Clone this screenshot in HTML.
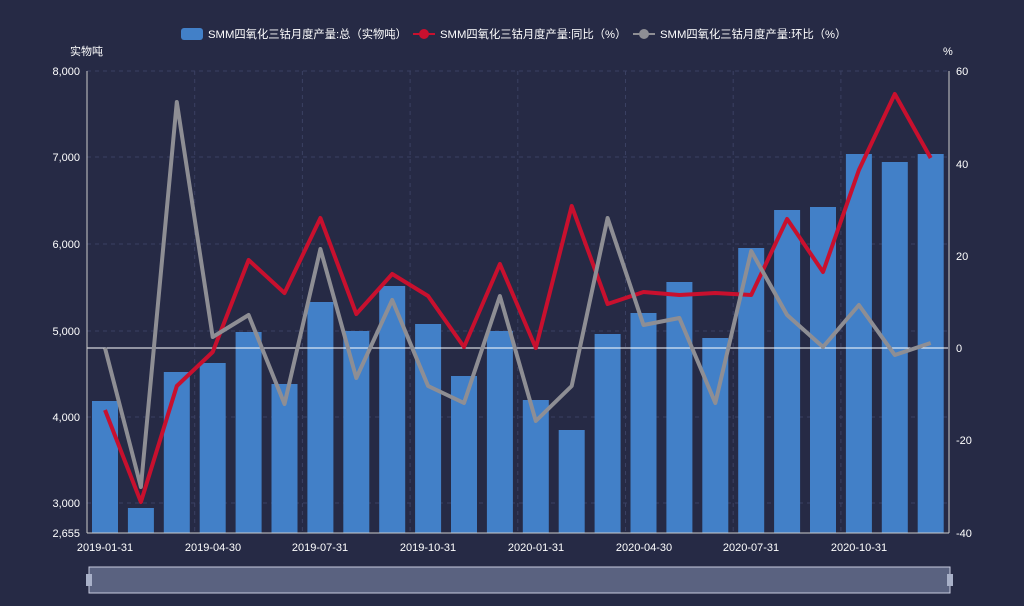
<!DOCTYPE html>
<html><head><meta charset="utf-8"><style>
body{margin:0;background:#262a45;width:1024px;height:601px;overflow:hidden;font-family:"Liberation Sans","Noto Sans CJK SC",sans-serif}
svg text{font-family:"Liberation Sans","Noto Sans CJK SC",sans-serif;fill:#fff;font-size:11px}
</style></head><body>
<svg id="s" width="1024" height="601" xmlns="http://www.w3.org/2000/svg">
<rect width="1024" height="601" fill="#262a45"/>
<g id="grid" stroke="#3a4062" stroke-dasharray="4,4" stroke-width="1"></g>
<g id="bars" fill="#4280c8"></g>
<line x1="87" y1="348" x2="948" y2="348" stroke="#fff" stroke-width="1"/>
<polyline id="red" fill="none" stroke="#c8102e" stroke-width="4" stroke-linejoin="round"/>
<polyline id="gray" fill="none" stroke="#8e8e94" stroke-width="4" stroke-linejoin="round"/>
<line x1="87" y1="71" x2="87" y2="533" stroke="#ccc"/>
<line x1="949" y1="71" x2="949" y2="533" stroke="#ccc"/>
<line x1="87" y1="533" x2="949" y2="533" stroke="#ccc"/>
<g text-anchor="end">
<text x="80" y="75">8,000</text><text x="80" y="161">7,000</text><text x="80" y="248">6,000</text><text x="80" y="335">5,000</text><text x="80" y="421">4,000</text><text x="80" y="507">3,000</text><text x="80" y="537">2,655</text>
</g>
<text x="70" y="55">实物吨</text>
<text x="943" y="55">%</text>
<g><text x="956" y="75">60</text><text x="956" y="168">40</text><text x="956" y="260">20</text><text x="956" y="352">0</text><text x="956" y="444">-20</text><text x="956" y="537">-40</text></g>
<g text-anchor="middle">
<text x="105" y="551">2019-01-31</text><text x="213" y="551">2019-04-30</text><text x="320" y="551">2019-07-31</text><text x="428" y="551">2019-10-31</text><text x="536" y="551">2020-01-31</text><text x="644" y="551">2020-04-30</text><text x="751" y="551">2020-07-31</text><text x="859" y="551">2020-10-31</text>
</g>
<rect x="181" y="28" width="22" height="12" rx="3" fill="#4280c8"/>
<text x="208" y="38" style="font-size:11.3px">SMM四氧化三钴月度产量:总（实物吨）</text>
<line x1="413" y1="34" x2="435" y2="34" stroke="#c8102e" stroke-width="2"/><circle cx="424" cy="34" r="5" fill="#c8102e"/>
<text x="440" y="38" style="font-size:11.3px">SMM四氧化三钴月度产量:同比（%）</text>
<line x1="633" y1="34" x2="655" y2="34" stroke="#8e8e94" stroke-width="2"/><circle cx="644" cy="34" r="5" fill="#8e8e94"/>
<text x="660" y="38" style="font-size:11.3px">SMM四氧化三钴月度产量:环比（%）</text>
<rect x="89" y="567" width="861" height="26" fill="#5a6280" stroke="#c8cce0" stroke-width="1"/>
<rect x="86" y="574" width="6" height="12" fill="#a8b0c8"/><rect x="947" y="574" width="6" height="12" fill="#a8b0c8"/>
</svg>
<script>
var b=[401,508,372,363,332,384,302,331,286,324,376,331,400,430,334,313,282,338,248,210,207,154,162,154];
var r=[410,502,386,352,260,293,218,314,274,296,347,264,348,206,304,292,295,293,295,219,272,170,94,158];
var g=[348,487,102,337,315,404,249,378,300,386,403,296,421,386,218,325,318,403,251,315,347,305,355,343];
var ns="http://www.w3.org/2000/svg",W=35.9;
function el(t,a,p){var e=document.createElementNS(ns,t);for(var k in a)e.setAttribute(k,a[k]);document.getElementById(p).appendChild(e);}
[71,157,244,331,417,503].forEach(function(y){el('line',{x1:87,x2:948,y1:y,y2:y},'grid');});
for(var i=1;i<8;i++){var x=87+W*3*i;el('line',{x1:x,x2:x,y1:71,y2:533},'grid');}
var rp=[],gp=[];
b.forEach(function(y,i){var c=105+W*i;el('rect',{x:c-13,y:y,width:26,height:533-y},'bars');rp.push(c+','+r[i]);gp.push(c+','+g[i]);});
document.getElementById('red').setAttribute('points',rp.join(' '));
document.getElementById('gray').setAttribute('points',gp.join(' '));
</script>
</body></html>
